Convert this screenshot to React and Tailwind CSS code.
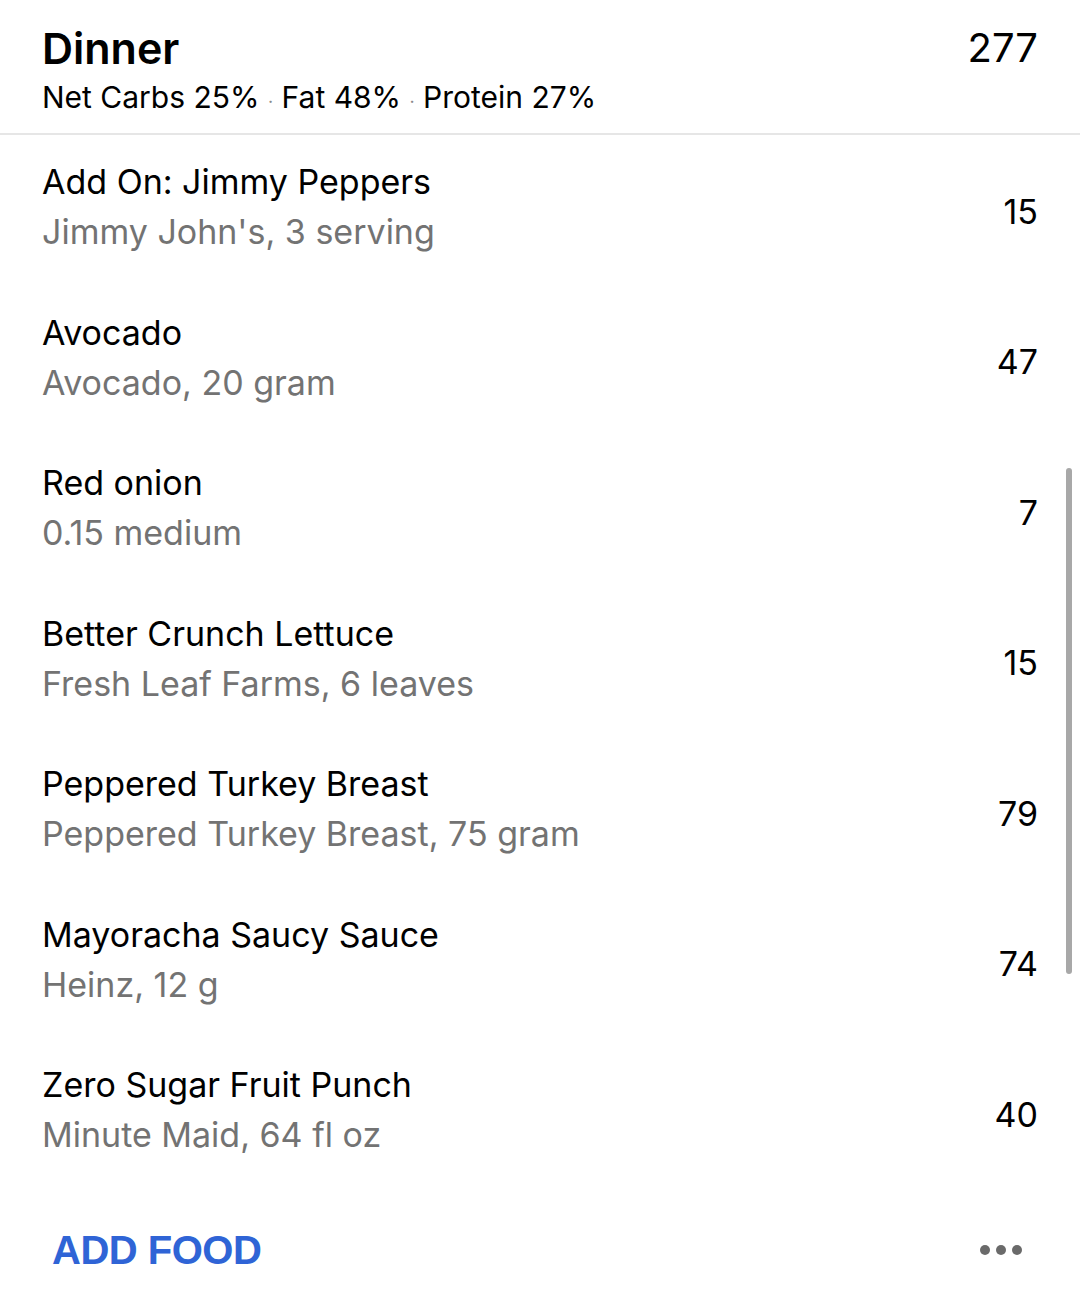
const FOODS = [
  { name: 'Add On: Jimmy Peppers', detail: "Jimmy John's, 3 serving", cals: 15 },
  { name: 'Avocado', detail: 'Avocado, 20 gram', cals: 47 },
  { name: 'Red onion', detail: '0.15 medium', cals: 7 },
  { name: 'Better Crunch Lettuce', detail: 'Fresh Leaf Farms, 6 leaves', cals: 15 },
  { name: 'Peppered Turkey Breast', detail: 'Peppered Turkey Breast, 75 gram', cals: 79 },
  { name: 'Mayoracha Saucy Sauce', detail: 'Heinz, 12 g', cals: 74 },
  { name: 'Zero Sugar Fruit Punch', detail: 'Minute Maid, 64 fl oz', cals: 40 },
]

function FoodRow({ food }) {
  return (
    <li className="flex h-[150.5px] items-center justify-between pl-[42px] pr-[42px]">
      <div className="flex flex-col pb-[6px]">
        <span className="text-[34px] leading-[50px] text-black">{food.name}</span>
        <span className="text-[34px] leading-[50px] text-[#737373]">{food.detail}</span>
      </div>
      <span className="pt-[2px] text-[34px] text-black">{food.cals}</span>
    </li>
  )
}

export default function App() {
  return (
    <div className="relative min-h-[1297px] w-[1080px] bg-white font-['Inter',sans-serif] text-black">
      <header className="flex h-[135px] items-start justify-between border-b-2 border-[#e6e6e6] pl-[42px] pr-[42px] pt-[22px]">
        <div className="flex flex-col">
          <h1 className="text-[43px] font-semibold leading-[52px]">Dinner</h1>
          <p className="mt-[-2px] text-[30px] leading-[50px]">
            Net Carbs 25% <span className="text-[18px] text-[#8a8a8a]">·</span> Fat 48%{' '}
            <span className="text-[18px] text-[#8a8a8a]">·</span> Protein 27%
          </p>
        </div>
        <span className="text-[40px] leading-[52px]">277</span>
      </header>

      <ul className="flex flex-col">
        {FOODS.map((food) => (
          <FoodRow key={food.name} food={food} />
        ))}
      </ul>

      <footer className="flex h-[108px] items-center justify-between pl-[52px] pr-[58px] pt-[14px]">
        <button
          type="button"
          className="font-['Liberation_Sans',sans-serif] text-[40px] font-bold tracking-[-0.5px] text-[#2f64d6]"
        >
          ADD FOOD
        </button>
        <div className="flex gap-[6px]">
          <span className="h-[10px] w-[10px] rounded-full bg-[#6a6a6a]" />
          <span className="h-[10px] w-[10px] rounded-full bg-[#6a6a6a]" />
          <span className="h-[10px] w-[10px] rounded-full bg-[#6a6a6a]" />
        </div>
      </footer>

      <div className="absolute left-[1066px] top-[468px] h-[506px] w-[6px] rounded-full bg-[#a8a8a8]" />
    </div>
  )
}
